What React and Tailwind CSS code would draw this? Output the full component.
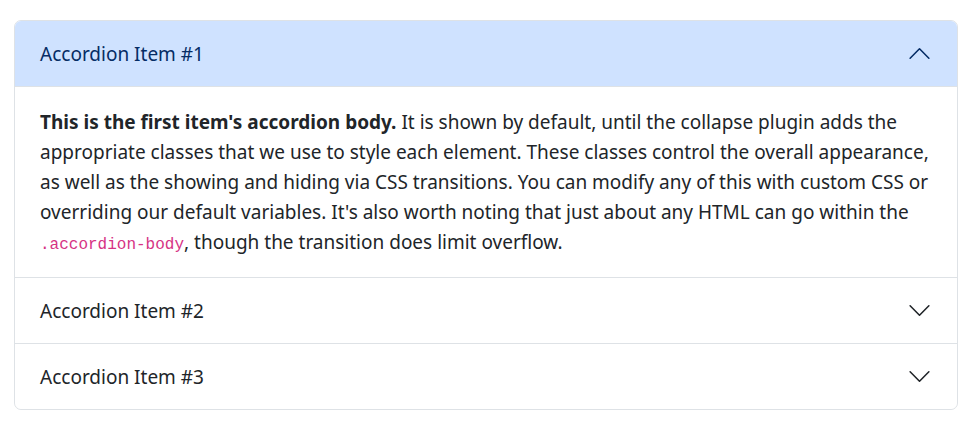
import React from "react";

function Chevron({ up, color }) {
  return (
    <svg
      width="25"
      height="25"
      viewBox="0 0 16 16"
      fill="none"
      stroke={color}
      strokeLinecap="round"
      strokeLinejoin="round"
      className={up ? "rotate-180 shrink-0" : "shrink-0"}
    >
      <path d="M2 5L8 11L14 5" />
    </svg>
  );
}

function Header({ title, active, last }) {
  return (
    <button
      className={
        "flex h-[65px] w-full items-center justify-between px-[25px] text-left text-[19px] " +
        (active ? "bg-[#cfe2ff] text-[#052c65]" : "bg-white text-[#212529]") +
        (last ? " rounded-b-[7px]" : "")
      }
    >
      <span className="pt-[2px]">{title}</span>
      <Chevron up={active} color={active ? "#052c65" : "#212529"} />
    </button>
  );
}

export default function App() {
  return (
    <div
      className="min-h-[426px] bg-white px-[14px] pt-[20px]"
      style={{ fontFamily: '"Noto Sans", "Open Sans", sans-serif' }}
    >
      <div className="w-[944px] overflow-hidden rounded-[7px] border border-[#dee2e6]">
        <div>
          <Header title="Accordion Item #1" active />
          <div className="border-t border-[#dee2e6] px-[25px] py-[20px] text-[19px] leading-[30px] text-[#212529]">
            <strong className="font-bold">This is the first item's accordion body.</strong> It is shown by
            default, until the collapse plugin adds the appropriate classes that we use to style each
            element. These classes control the overall appearance, as well as the showing and hiding via
            CSS transitions. You can modify any of this with custom CSS or overriding our default
            variables. It's also worth noting that just about any HTML can go within the{" "}
            <code
              className="text-[16px] leading-none text-[#d63384]"
              style={{ fontFamily: '"Liberation Mono", monospace' }}
            >
              .accordion-body
            </code>
            , though the transition does limit overflow.
          </div>
        </div>
        <div className="border-t border-[#dee2e6]">
          <Header title="Accordion Item #2" />
        </div>
        <div className="border-t border-[#dee2e6]">
          <Header title="Accordion Item #3" last />
        </div>
      </div>
    </div>
  );
}
